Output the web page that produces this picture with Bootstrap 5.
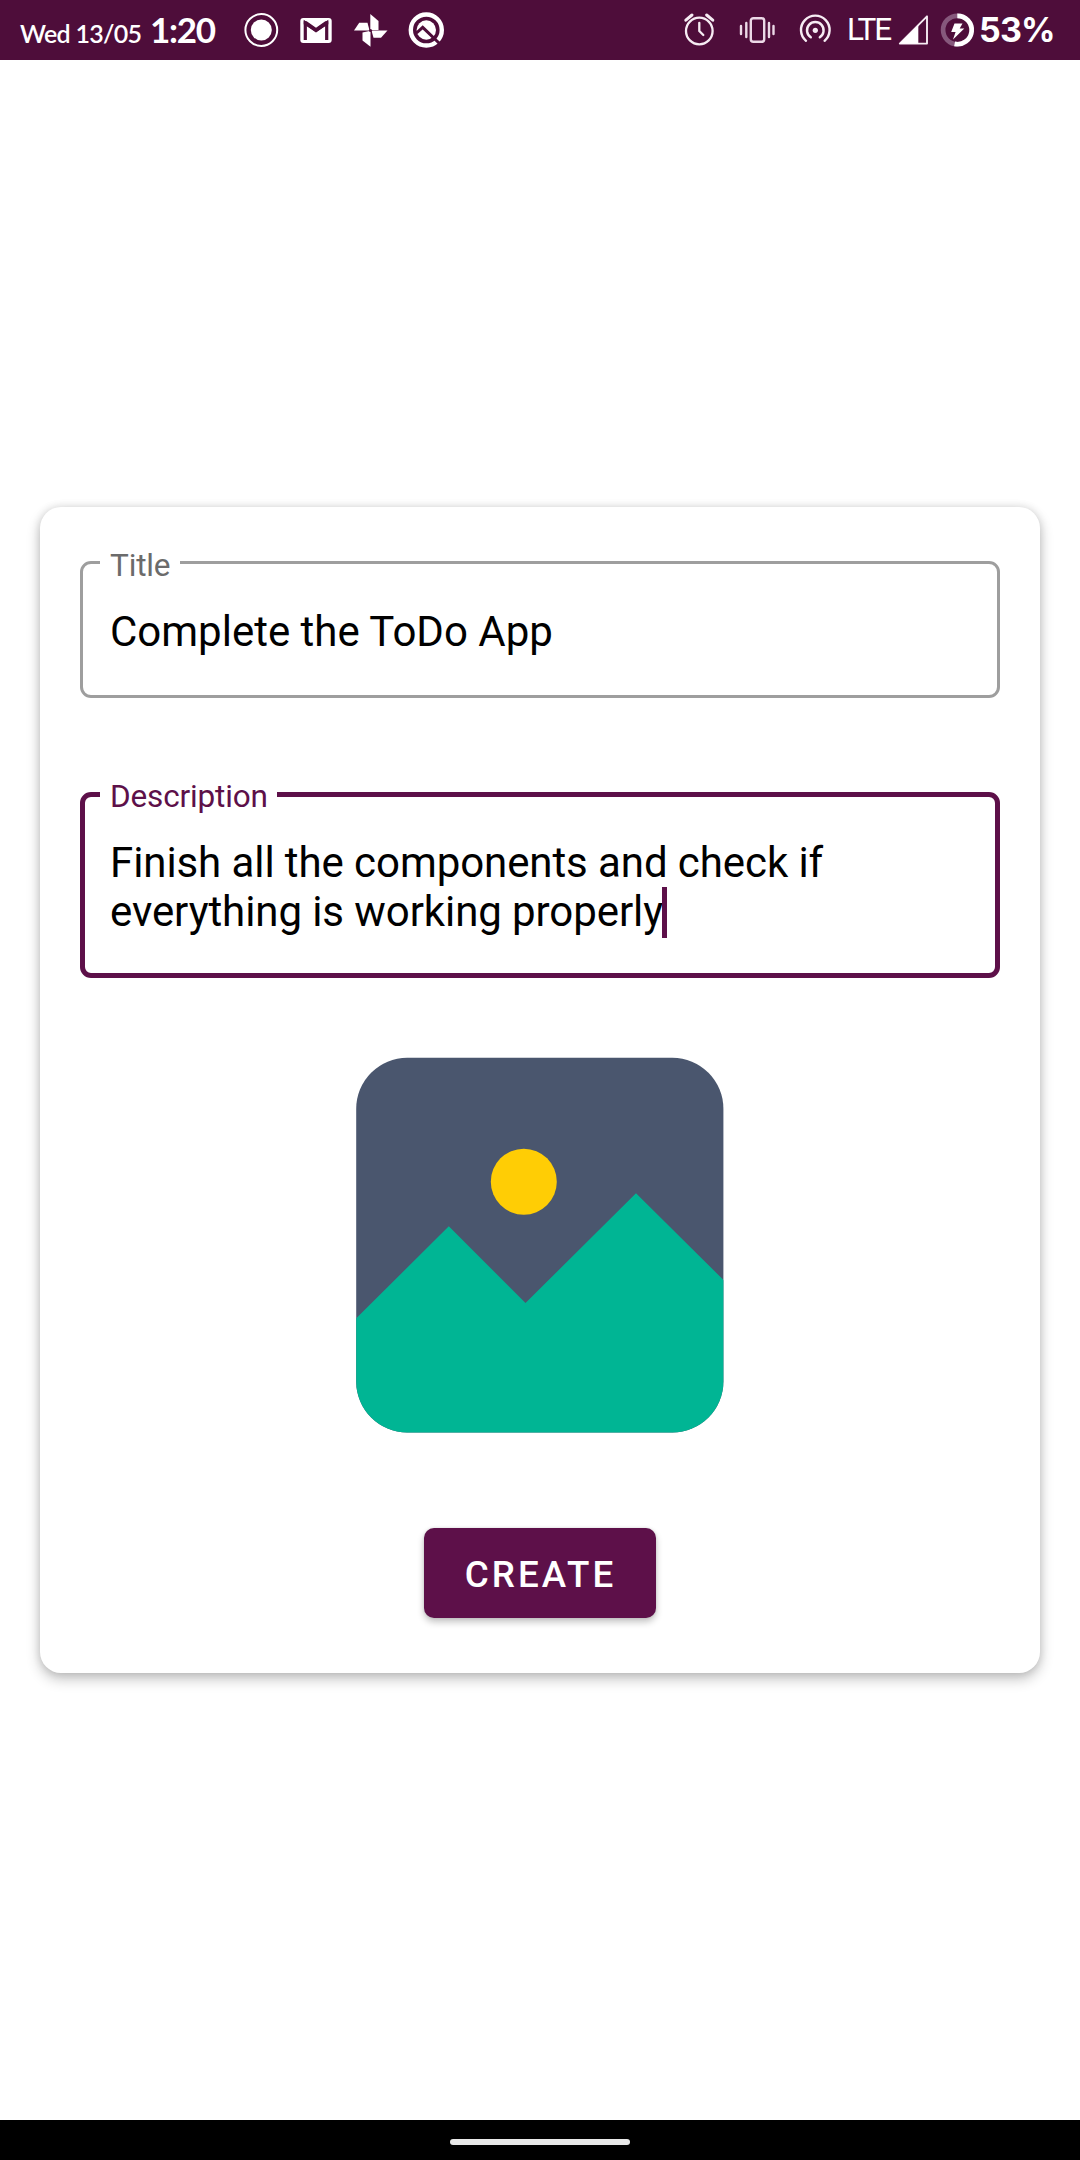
<!DOCTYPE html>
<html lang="en">
<head>
<meta charset="utf-8">
<meta name="viewport" content="width=device-width, initial-scale=1">
<title>ToDo App</title>
<link href="https://cdn.jsdelivr.net/npm/bootstrap@5.3.0/dist/css/bootstrap.min.css" rel="stylesheet">
<style>
  body { font-family: Roboto, "Liberation Sans", sans-serif; background: #fff; height: 2160px; overflow: hidden; }
  .status-bar { height: 60px; background: #4e0d3a; color: #fff; padding-left: 20px; padding-right: 20px; }
  .status-bar svg { width: 36px; height: 36px; flex: none; }
  .clock-area { width: 223px; font-family: Lato, sans-serif; line-height: 60px; white-space: nowrap; padding-top: 2px; }
  .clock-date { font-size: 25px; font-weight: 600; letter-spacing: -.7px; width: 130px; }
  .clock-time { font-size: 35px; font-weight: 700; letter-spacing: -1.3px; }
  .notif-icons { gap: 19px; }
  .system-icons { gap: 22px; }
  .net-label { width: 62px; padding-left: 14px; font-size: 31.5px; font-weight: 400; line-height: 60px; letter-spacing: -2.2px; }
  .battery-icon { margin-left: 8px; }
  .battery-label { width: 85px; padding-left: 4px; font: 700 34px/60px Inter, sans-serif; letter-spacing: -.8px; }
  .todo-card { width: 1000px; height: 1166px; margin-top: 447px; border-radius: 21px; padding: 35px 40px 0;
    box-shadow: 0 6px 14px rgba(0,0,0,.24), 0 0 8px rgba(0,0,0,.12); }
  .outlined { border: 3px solid #9e9e9e; border-radius: 11px; height: 156px; color: #000; }
  .outlined legend { font-size: 31.5px; height: 41px; line-height: 36px; color: #6b6b6b; margin-left: 17px; padding: 6px 0 0 10px; width: 80px !important; letter-spacing: -.15px; }
  .outlined .field-text { font-size: 42px; line-height: 49px; padding: 24px 25px 0 27px; letter-spacing: 0; }
  .outlined.is-active { border: 5px solid #5d1049; height: 203px; margin-top: 77px; }
  .outlined.is-active legend { height: 39px; color: #5d1049; margin-left: 15px; padding-top: 4px; width: 177px !important; }
  .outlined.is-active .field-text { padding-left: 25px; letter-spacing: -.08px; }
  .caret { display: inline-block; width: 5px; height: 51px; background: #5d1049; vertical-align: -10px; margin: -4px 0 -2px -1px; }
  .picture { width: 368px; height: 376px; margin-top: 79px; margin-left: 275.7px; }
  .btn-create { --bs-btn-color: #fff; --bs-btn-bg: #5d1049; --bs-btn-border-width: 0; --bs-btn-border-radius: 10px;
    --bs-btn-hover-color: #fff; --bs-btn-hover-bg: #6f1a59; --bs-btn-font-size: 36.75px; --bs-btn-font-weight: 500;
    width: 232px; height: 90px; margin-top: 95px; letter-spacing: 3.05px; padding: 4px 0 0 1px;
    box-shadow: 0 4px 7px rgba(0,0,0,.24), 0 0 3px rgba(0,0,0,.12); }
  .gesture-bar { height: 40px; background: #000; padding-top: 19px; }
  .gesture-pill { width: 180px; height: 6px; background: #e8e8e8; }
</style>
</head>
<body class="d-flex flex-column">
<header class="status-bar d-flex align-items-center flex-shrink-0">
  <div class="clock-area d-flex align-items-baseline"><span class="clock-date">Wed 13/05</span><span class="clock-time">1:20</span></div>
  <div class="notif-icons d-flex">
    <svg viewBox="0 0 36 36"><circle cx="18.3" cy="18" r="15.9" fill="none" stroke="#fff" stroke-width="2"/><circle cx="18.3" cy="18" r="10.5" fill="#fff"/></svg>
    <svg viewBox="0 0 36 36"><rect x="2.3" y="6" width="31.4" height="25" rx="3" fill="#fff"/><path d="M7.300 28V10.800L18 18.500l10.700-7.700V28" fill="none" stroke="#4e0d3a" stroke-width="3.200"/><path d="M5.700 9.300h3L18 15.700l9.300-6.400h3v3L18 20.300 5.700 12.300z" fill="#4e0d3a"/></svg>
    <svg viewBox="0 0 36 36" fill="#fff"><path d="M17.300 2L25.500 9V18H17.300z"/><path d="M34.500 18.500L28 25.700H20.500L18.500 18.500z"/><path d="M17.500 34.700L9.500 28.500V20.500L17.500 18.700z"/><path d="M1 18.500L6.200 10.700H14.500L16.500 18.500z"/><circle cx="17.500" cy="18.500" r="1.600" fill="#4e0d3a"/></svg>
    <svg viewBox="0 0 36 36"><circle cx="18.300" cy="18" r="15.500" fill="none" stroke="#fff" stroke-width="4.400"/><circle cx="18.300" cy="18" r="9.700" fill="#fff"/><path d="M8.500 21l6.200-5.700L31 31" fill="none" stroke="#4e0d3a" stroke-width="3"/></svg>
  </div>
  <div class="system-icons d-flex ms-auto">
    <svg viewBox="0 0 36 36" fill="none" stroke="#f6ecf3" stroke-width="2.300" stroke-linecap="round" stroke-linejoin="round"><circle cx="18.300" cy="19" r="13.300"/><path d="M18.300 10.800V19l4 4"/><path d="M4.800 8.200l6.200-5.200M31.800 8.200L25.600 3" stroke-width="3"/></svg>
    <svg viewBox="0 0 36 36" fill="none" stroke="#ecd9e7" stroke-width="2.400" stroke-linecap="round"><rect x="11.800" y="6.200" width="13.400" height="23.600" rx="2.600"/><path d="M7.300 11v14M2 14v8M30 11v14M34.500 14v8"/></svg>
    <svg viewBox="0 0 36 36" fill="none" stroke="#f6ecf3" stroke-width="2.400" stroke-linecap="round"><circle cx="18.300" cy="18.300" r="2.600" fill="#f6ecf3" stroke="none"/><path d="M13.800 25.300A8.300 8.300 0 1 1 22.800 25.300"/><path d="M9 28.800A14.300 14.300 0 1 1 27.600 28.800"/></svg>
  </div>
  <span class="net-label">LTE</span>
  <svg viewBox="0 0 36 36"><path d="M32 4.300V31.600H4.800z" fill="none" stroke="#f6ecf3" stroke-width="1.900" stroke-linejoin="round"/><path d="M4.500 31.800L23.300 13v18.800z" fill="#fff"/></svg>
  <svg class="battery-icon" viewBox="0 0 36 36" fill="none"><circle cx="18.300" cy="18" r="14.200" stroke="#86587c" stroke-width="4.700"/><path d="M18.300 3.800a14.200 14.200 0 1 1-2.700 28.100" stroke="#fff" stroke-width="4.700"/><path d="M15.500 11.500h8l-2.800 5h4.600L14 27.500l2.600-7.500h-4.400z" fill="#fff"/></svg>
  <span class="battery-label">53%</span>
</header>

<main class="flex-grow-1">
  <form class="todo-card card border-0 bg-white mx-auto">
    <fieldset class="outlined">
      <legend class="float-none mb-0">Title</legend>
      <div class="field-text">Complete the ToDo App</div>
    </fieldset>
    <fieldset class="outlined is-active">
      <legend class="float-none mb-0">Description</legend>
      <div class="field-text">Finish all the components and check if<br>everything is working properly<span class="caret"></span></div>
    </fieldset>
    <svg class="picture" viewBox="0 0 368 376">
      <defs><clipPath id="frame"><rect x=".2" y=".8" width="367.200" height="374.700" rx="51"/></clipPath></defs>
      <g clip-path="url(#frame)">
        <path d="M0 0h368v376H0z" fill="#4a566e"/>
        <circle cx="167.800" cy="124.700" r="33" fill="#ffcd05"/>
        <path d="M0 261.500L92.800 169.300 169.500 246 280 136.300 368 223.500V376H0z" fill="#00b594"/>
      </g>
    </svg>
    <button type="button" class="btn btn-create align-self-center">CREATE</button>
  </form>
</main>

<footer class="gesture-bar flex-shrink-0"><div class="gesture-pill rounded-pill mx-auto"></div></footer>
<script src="https://cdn.jsdelivr.net/npm/bootstrap@5.3.0/dist/js/bootstrap.bundle.min.js"></script>
</body>
</html>
